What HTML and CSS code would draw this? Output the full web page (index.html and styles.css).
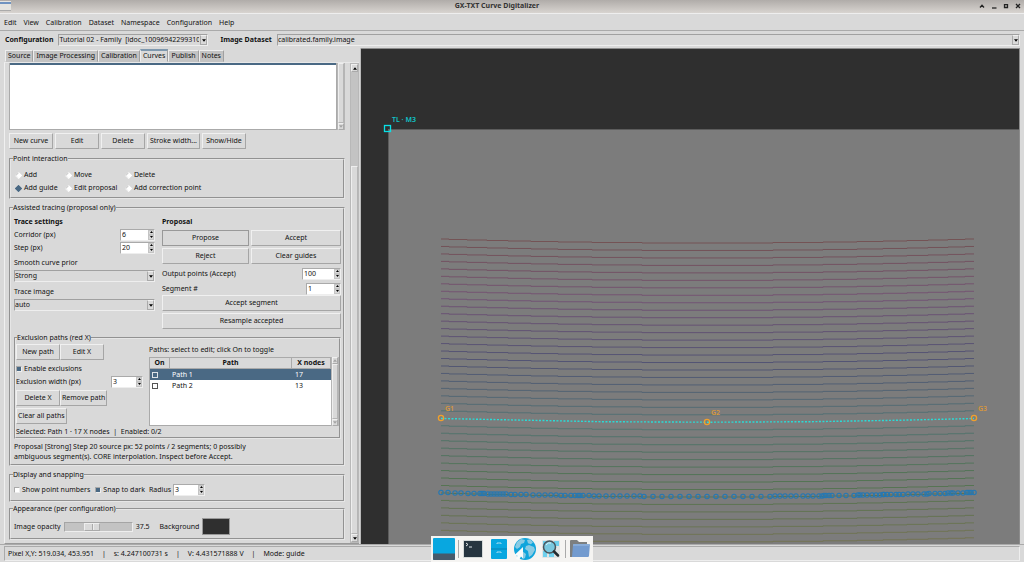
FILE: index.html
```html
<!DOCTYPE html>
<html lang="en">
<head>
<meta charset="utf-8">
<title>GX-TXT Curve Digitalizer</title>
<link rel="stylesheet" href="styles.css">
</head>
<body>
<svg class="defs" width="0" height="0" aria-hidden="true">
  <symbol id="down" viewBox="0 0 5 3"><path d="M0 0h5L2.500 3z"/></symbol>
  <symbol id="up" viewBox="0 0 5 3"><path d="M0 3h5L2.500 0z"/></symbol>
</svg>
<div class="window">
  <header class="titlebar">
    <svg class="app-icon" viewBox="0 0 11 10"><rect width="11" height="10" fill="#e4e4e0"/><rect y="1" width="11" height="2" fill="#6f93c0"/><path d="M0 9.500h11" stroke="#aaa"/></svg>
    <h1>GX-TXT Curve Digitalizer</h1>
    <div class="win-buttons">
      <button aria-label="Shade"><svg viewBox="0 0 6 6"><path d="M1 4.500L3 2.200L5 4.500"/></svg></button>
      <button aria-label="Minimize"><svg viewBox="0 0 6 6"><path d="M1 5h4.500"/></svg></button>
      <button aria-label="Maximize"><svg viewBox="0 0 6 6"><path d="M1.500 1.700h3v2.800h-3z"/></svg></button>
      <button aria-label="Close"><svg viewBox="0 0 6 6"><path d="M1 1l4 4M5 1L1 5"/></svg></button>
    </div>
  </header>
  <nav class="menubar">
    <button>Edit</button><button>View</button><button>Calibration</button><button>Dataset</button><button>Namespace</button><button>Configuration</button><button>Help</button>
  </nav>
  <div class="toolbar">
    <label for="config">Configuration</label>
    <div class="combo config"><select id="config"><option>Tutorial 02 - Family&nbsp; [idoc_100969422993100]</option></select><span><svg><use href="#down"/></svg></span></div>
    <label for="dataset">Image Dataset</label>
    <div class="combo grow"><select id="dataset"><option>calibrated.family.image</option></select><span><svg><use href="#down"/></svg></span></div>
  </div>
  <main class="main">
    <section class="side">
      <div class="tabs" role="tablist">
        <button role="tab">Source</button><button role="tab">Image Processing</button><button role="tab">Calibration</button><button role="tab" class="active" aria-selected="true">Curves</button><button role="tab">Publish</button><button role="tab">Notes</button>
      </div>
      <div class="page">
        <div class="content">
          <div class="curve-list"><div class="listbox"><div class="selected-row"></div></div><div class="scroll off"><i></i><b><svg><use href="#down"/></svg></b></div></div>
          <div class="actions"><button class="btn">New curve</button><button class="btn">Edit</button><button class="btn">Delete</button><button class="btn">Stroke width...</button><button class="btn">Show/Hide</button></div>

          <fieldset class="points">
            <legend>Point interaction</legend>
            <div class="radios">
              <label><input type="radio" name="mode">Add</label>
              <label><input type="radio" name="mode">Move</label>
              <label><input type="radio" name="mode">Delete</label>
              <label><input type="radio" name="mode" checked>Add guide</label>
              <label><input type="radio" name="mode">Edit proposal</label>
              <label><input type="radio" name="mode">Add correction point</label>
            </div>
          </fieldset>

          <fieldset class="tracing">
            <legend>Assisted tracing (proposal only)</legend>
            <div class="columns">
              <div class="settings">
                <h2>Trace settings</h2>
                <div class="row"><label for="corridor">Corridor (px)</label><div class="spin"><input type="number" id="corridor" value="6"><div><button aria-label="Increase"><svg><use href="#up"/></svg></button><button aria-label="Decrease"><svg><use href="#down"/></svg></button></div></div></div>
                <div class="row"><label for="step">Step (px)</label><div class="spin"><input type="number" id="step" value="20"><div><button aria-label="Increase"><svg><use href="#up"/></svg></button><button aria-label="Decrease"><svg><use href="#down"/></svg></button></div></div></div>
                <label class="above" for="prior">Smooth curve prior</label>
                <div class="combo"><select id="prior"><option>Strong</option></select><span><svg><use href="#down"/></svg></span></div>
                <label class="above" for="trace">Trace image</label>
                <div class="combo"><select id="trace"><option>auto</option></select><span><svg><use href="#down"/></svg></span></div>
              </div>
              <div class="proposal">
                <h2>Proposal</h2>
                <div class="pair"><button class="btn default">Propose</button><button class="btn">Accept</button><button class="btn">Reject</button><button class="btn">Clear guides</button></div>
                <div class="row tall"><label for="output">Output points (Accept)</label><div class="spin wide"><input type="number" id="output" value="100"><div><button aria-label="Increase"><svg><use href="#up"/></svg></button><button aria-label="Decrease"><svg><use href="#down"/></svg></button></div></div></div>
                <div class="row"><label for="segment">Segment #</label><div class="spin"><input type="number" id="segment" value="1"><div><button aria-label="Increase"><svg><use href="#up"/></svg></button><button aria-label="Decrease"><svg><use href="#down"/></svg></button></div></div></div>
                <div class="stack"><button class="btn">Accept segment</button><button class="btn">Resample accepted</button></div>
              </div>
            </div>

            <fieldset class="exclusion">
              <legend>Exclusion paths (red X)</legend>
              <div class="exclusion-body">
                <div class="exclusion-tools">
                  <div class="group"><button class="btn">New path</button><button class="btn">Edit X</button></div>
                  <label class="check"><input type="checkbox" checked>Enable exclusions</label>
                  <div class="row"><label for="exwidth">Exclusion width (px)</label><div class="spin small"><input type="number" id="exwidth" value="3"><div><button aria-label="Increase"><svg><use href="#up"/></svg></button><button aria-label="Decrease"><svg><use href="#down"/></svg></button></div></div></div>
                  <div class="group"><button class="btn">Delete X</button><button class="btn">Remove path</button></div>
                  <div class="group"><button class="btn">Clear all paths</button></div>
                </div>
                <div class="paths">
                  <p>Paths: select to edit; click On to toggle</p>
                  <div class="tree">
                    <div class="table-box">
                      <table>
                        <thead><tr><th class="on">On</th><th>Path</th><th class="nodes">X nodes</th></tr></thead>
                        <tbody>
                          <tr class="current"><td><input type="checkbox" aria-label="Path 1 on"></td><td>Path 1</td><td class="count">17</td></tr>
                          <tr><td><input type="checkbox" aria-label="Path 2 on"></td><td>Path 2</td><td class="count">13</td></tr>
                        </tbody>
                      </table>
                    </div>
                    <div class="scroll off"><b><svg><use href="#up"/></svg></b><i></i><b><svg><use href="#down"/></svg></b></div>
                  </div>
                </div>
              </div>
              <p class="selected">Selected: Path 1 · 17 X nodes&nbsp; |&nbsp; Enabled: 0/2</p>
            </fieldset>
            <p class="message">Proposal [Strong] Step 20 source px: 52 points / 2 segments; 0 possibly<br>ambiguous segment(s). CORE interpolation. Inspect before Accept.</p>
          </fieldset>

          <fieldset class="display">
            <legend>Display and snapping</legend>
            <div class="line">
              <label class="check"><input type="checkbox">Show point numbers</label>
              <label class="check snap"><input type="checkbox" checked>Snap to dark</label>
              <label class="radius" for="radius">Radius</label>
              <div class="spin small"><input type="number" id="radius" value="3"><div><button aria-label="Increase"><svg><use href="#up"/></svg></button><button aria-label="Decrease"><svg><use href="#down"/></svg></button></div></div>
            </div>
          </fieldset>

          <fieldset class="appearance">
            <legend>Appearance (per configuration)</legend>
            <div class="line">
              <label for="opacity">Image opacity</label>
              <input type="range" id="opacity" min="0" max="100" step="0.5" value="37.5">
              <output for="opacity">37.5</output>
              <span class="bg-label" id="bg">Background</span>
              <button class="swatch" aria-labelledby="bg"></button>
            </div>
          </fieldset>
        </div>
        <div class="scroll outer"><b><svg><use href="#up"/></svg></b><u></u><i></i><b><svg><use href="#down"/></svg></b></div>
      </div>
    </section>
    <svg class="canvas" id="canvas" role="img" aria-label="Curve canvas"></svg>
  </main>
  <footer class="status"><div><span>Pixel X,Y: 519.034, 453.951</span><span>|</span><span>s: 4.247100731 s</span><span>|</span><span>V: 4.431571888 V</span><span>|</span><span>Mode: guide</span></div></footer>
</div>

<nav class="dock" aria-label="Dock">
  <button aria-label="Show desktop"><svg viewBox="0 0 22 22"><rect width="22" height="22" rx="1" fill="#08a7e0"/><path d="M0 15.500h22V21a1 1 0 0 1-1 1H1a1 1 0 0 1-1-1z" fill="#465a6b"/></svg></button>
  <hr>
  <button aria-label="Terminal"><svg viewBox="0 0 22 22"><rect x="1" y="2" width="20" height="18" rx="1" fill="#d5dad9"/><rect x="2" y="3" width="18" height="16" fill="#263540"/><path d="M4 5l2 1.500L4 8M7 9h3" fill="none" stroke="#dfe5e8"/></svg></button>
  <button aria-label="Files"><svg viewBox="0 0 22 22"><rect x="3" y="1" width="16" height="20" rx="1" fill="#08a7e0"/><path d="M3 11h16" stroke="#0681b3"/><path d="M9 6v-1h4v1M9 15v-1h4v1" fill="none" stroke="#a5dcf0"/></svg></button>
  <button aria-label="Web browser"><svg viewBox="0 0 22 22"><circle cx="11" cy="11" r="11" fill="#0fa5dc"/><path d="M3 4l4-3 4 1-1 3-3 1-1 3-3 2-2-2zM13 2l3-.8 3 3-2 2-3-1zM12 8l3-1 5 2 1 3-3 5-3 2-1-6-3-2zM8 13l4 3-1 4-2 1-2-4z" fill="#8acbe3"/><path d="M9 9L0 17.500l3.500.3L2 21l3 1 2-3.500 2 2z" fill="#f8fbfc"/></svg></button>
  <button aria-label="Application finder"><svg viewBox="0 0 22 22"><rect x="2" y="2" width="18" height="18" rx="1" fill="#e0e5e5"/><path d="M3 3h4v4H3zM14 3h5v5h-5zM3 13h4v6H3zM9 15h5v4H9z" fill="#6ed0ed"/><circle cx="9.500" cy="9" r="6" fill="#78c8df" stroke="#48545b" stroke-width="1.500"/><path d="M6 7q2-3 5-2" fill="none" stroke="#d9f3fa"/><path d="M14 13.500l4 4" stroke="#222b30" stroke-width="2.500" stroke-linecap="round"/></svg></button>
  <hr>
  <button aria-label="Home folder"><svg viewBox="0 0 22 22"><path d="M1 3q0-1 1-1h6l2 2h8v15H1z" fill="#7c7f80"/><path d="M3 19L4 7q.2-1 1.200-1H20q1 0 .9 1L20 18q-.2 1-1.200 1z" fill="#739bcf"/><path d="M4 7h16" stroke="#9dbce2"/></svg></button>
</nav>
<script src="canvas.js"></script>
</body>
</html>
```

FILE: styles.css
```css
* { box-sizing: border-box; }
body, h1, h2, p, fieldset, legend, hr { margin: 0; padding: 0; }
body, button, input, select {
  font: 7px/10px "Noto Sans", sans-serif;
  color: #111;
}
body { background: #d9d9d9; overflow: hidden; }
button { border: 0; padding: 0; background: none; white-space: nowrap; }
fieldset { border: 2px groove #e6e6e6; min-width: 0; }
legend { line-height: 10px; margin-left: -1px; }
.defs { position: absolute; }
.window { height: 100vh; display: flex; flex-direction: column; }

.titlebar {
  display: flex; align-items: center; height: 13px; padding: 0 3px 1px 0;
  background: linear-gradient(#b0aca9, #d8d4d0);
}
.titlebar h1 { flex: 1; text-align: center; font-size: 7px; line-height: 10px; color: #333; padding-left: 4px; }
.app-icon { width: 11px; height: 10px; }
.win-buttons { display: flex; gap: 6px; }
.win-buttons button, .win-buttons svg { display: block; width: 6px; height: 6px; }
.win-buttons path { fill: none; stroke: #222; stroke-width: 1.3; }

.menubar {
  display: flex; gap: 7px; height: 18px; padding: 1px 4px 0; align-items: center;
  border-top: 1px solid #eee; border-bottom: 1px solid #aaa;
}
.toolbar { display: flex; align-items: center; height: 17px; padding: 2px 4px 1px 5px; }
.toolbar label { font-weight: bold; margin-right: 5px; white-space: nowrap; }

.combo { position: relative; display: flex; height: 12px; }
.combo select {
  appearance: none; width: 100%; height: 12px; padding: 0 8px 0 0;
  background: #d9d9d9; border: 1px solid; border-color: #a0a0a0 #eee #eee #a0a0a0; border-radius: 0;
}
.combo span {
  position: absolute; right: 1px; top: 1px; width: 7px; height: 10px;
  display: flex; align-items: center; justify-content: center;
  background: #d9d9d9; border: 1px solid; border-color: #f0f0f0 #aaa #aaa #aaa; pointer-events: none;
}
.combo svg { width: 4px; height: 3px; }
.config { width: 150px; margin-right: 12px; }
.grow { flex: 1; }

.main { flex: 1; min-height: 0; display: flex; padding-right: 4px; }
.side { flex: 0 0 361px; display: flex; flex-direction: column; padding: 1px 1px 0 4px; border-right: 1px solid #bbb; }
.tabs { display: flex; height: 13px; padding-left: 1px; }
.tabs button {
  background: #c3c3c3; padding: 0 2px; border: 1px solid;
  border-color: #eee #a0a0a0 transparent #eee; margin-top: 1px; height: 12px;
}
.tabs .active { background: #d9d9d9; border-top: 2px solid #7e98ae; margin-top: 0; height: 13px; }
.page { flex: 1; min-height: 0; display: flex; border-left: 1px solid #f0f0f0; border-top: 1px solid #e8e8e8; border-bottom: 1px solid #999; }
.content { flex: 1; min-width: 0; padding: 0 5px 0 4px; overflow: hidden; }

.curve-list { display: flex; height: 67px; }
.listbox { flex: 1; background: #fff; border: 1px solid #aaa; border-top: 0; }
.selected-row { height: 2px; background: #4a6984; }
.scroll { width: 8px; display: flex; flex-direction: column; border-left: 1px solid #b5b5b5; border-right: 1px solid #b5b5b5; }
.scroll b { height: 7px; display: flex; align-items: center; justify-content: center; border: 1px solid; border-color: #f0f0f0 #aaa #aaa #f0f0f0; }
.scroll svg { width: 4px; height: 3px; }
.scroll i { flex: 1; border: 1px solid; border-color: #eee #b5b5b5 #b5b5b5 #eee; }
.scroll.off svg { fill: #a3a3a3; }
.outer { width: 9px; border: 1px solid #b8b8b8; }
.outer b { height: 8px; }
.outer u { height: 94px; background: #c3c3c3; }

.btn {
  height: 16px; padding: 0 2px; background: #d9d9d9;
  border: 1px solid; border-color: #f0f0f0 #a5a5a5 #a5a5a5 #f0f0f0;
}
.btn.default { border: 1px solid #999; }
.actions { display: flex; gap: 2px; padding: 3px 0 5px; }
.actions .btn { min-width: 44px; }

.points { height: 45px; }
.points legend { margin-left: 2px; }
.radios { display: grid; grid-template-columns: 50px 60px 1fr; row-gap: 3px; padding: 6px 4px 0 5px; }
.radios label { display: flex; align-items: center; gap: 3px; white-space: nowrap; }
.radios input {
  appearance: none; margin: 0; width: 5px; height: 5px; background: #fff;
  transform: rotate(45deg); border: 1px solid; border-color: #fff #fff #eee #ccc;
}
.radios input:checked { background: #4a6984; border-color: #4a6984; }

.tracing { margin-top: 4px; padding: 4px 2px 2px 3px; }
h2 { font-size: 7px; line-height: 10px; margin-bottom: 3px; }
.settings h2 { margin-bottom: 1px; }
.columns { display: grid; grid-template-columns: 141px 1fr; gap: 7px; }
.row { display: flex; align-items: center; justify-content: space-between; height: 13px; }
.row.tall { height: 17px; }
.above { display: block; padding: 4px 0 2px; }
.settings .combo + .above { padding-top: 5px; }
.spin { display: flex; width: 35px; height: 12px; border: 1px solid; border-color: #aaa #eee #eee #aaa; }
.spin.wide { width: 39px; }
.spin.small { width: 32px; }
.spin input {
  appearance: textfield; flex: 1; min-width: 0; height: 10px; border: 0; border-radius: 0;
  padding: 0 1px; background: #fff;
}
.spin input::-webkit-inner-spin-button { appearance: none; margin: 0; }
.spin div { width: 6px; display: flex; flex-direction: column; }
.spin button { flex: 1; display: flex; align-items: center; justify-content: center; border: 1px solid #c4c4c4; }
.spin svg { width: 3px; height: 2px; }
.pair { display: grid; grid-template-columns: 87px 1fr; gap: 2px; margin-bottom: 1px; }
.stack { display: grid; gap: 2px; }

.exclusion { margin-top: 4px; padding: 1px 0 0; }
.exclusion legend { margin-left: 1px; }
.exclusion-body { display: flex; }
.exclusion-tools { flex: 0 0 133px; }
.group { display: flex; margin-bottom: 2px; }
.group .btn { min-width: 44px; padding: 0 1px; }
.check { display: flex; align-items: center; gap: 2px; height: 13px; white-space: nowrap; }
.check input {
  appearance: none; width: 6px; height: 6px; margin: 0; background: #fff;
  border: 1px solid; border-color: #aaa #eee #eee #aaa;
}
.check input:checked { background: #4a6984; }
.exclusion-tools .row { width: 127px; margin-bottom: 2px; }
.paths { flex: 1; min-width: 0; padding-top: 1px; }
.tree { display: flex; height: 69px; margin-top: 2px; }
.table-box { flex: 1; background: #fff; border: 1px solid #aaa; border-right: 0; }
table { width: 100%; border-collapse: separate; border-spacing: 0; table-layout: fixed; }
th { height: 11px; padding: 0; background: #d9d9d9; border-right: 1px solid #aaa; border-bottom: 1px solid #aaa; }
td { height: 11px; padding: 0 2px; }
.on { width: 20px; }
.nodes { width: 39px; }
.count { padding-left: 3px; }
td input { appearance: none; display: block; width: 6px; height: 6px; margin: 0; border: 1px solid #555; border-radius: 0; }
.current td { background: #4a6984; color: #fff; }
.current input { border-color: #dde3e8; }
.selected { padding-top: 1px; }
.message { padding-top: 3px; }

.line { display: flex; align-items: center; white-space: nowrap; }
.display { margin-top: 4px; padding: 3px 4px 4px 3px; }
.display .line { height: 13px; }
.snap { margin-left: 5px; }
.radius { margin: 0 2px 0 4px; }
.appearance { margin-top: 2px; padding: 3px 3px 2px; }
.appearance .line { height: 19px; }
input[type="range"] {
  appearance: none; width: 69px; height: 10px; margin: 0 3px; background: #c3c3c3;
  border: 1px solid; border-color: #a5a5a5 #eee #eee #a5a5a5;
}
input[type="range"]::-webkit-slider-thumb {
  appearance: none; width: 16px; height: 8px;
  background: linear-gradient(90deg, #d9d9d9 7px, #aaa 7px, #aaa 8px, #eee 8px, #eee 9px, #d9d9d9 9px);
  border: 1px solid; border-color: #eee #aaa #aaa #eee;
}
.bg-label { margin: 0 3px 0 10px; }
.swatch { width: 28px; height: 17px; background: #2f2f2f; border: 1px solid #999; }

.canvas { flex: 1; min-width: 0; width: 100%; height: 100%; background: #2f2f2f; border: solid #8c8c8c; border-width: 1px 1px 0 0; }
.canvas text { font-weight: 600; }

.status { height: 18px; padding: 1px 4px 2px; border-top: 1px solid #aaa; }
.status div { display: flex; align-items: center; gap: 8px; height: 15px; padding-left: 3px; border: 1px solid; border-color: #aaa #eee #eee #aaa; }

.dock {
  position: fixed; bottom: 0; left: 50%; transform: translateX(-50%);
  display: flex; align-items: center; gap: 4px; height: 26px; padding: 2px; background: #f5f4f2;
}
.dock button, .dock svg { display: block; width: 22px; height: 22px; }
.dock hr { border: 0; width: 1px; height: 18px; margin: 0 -1px; background: #aaa; }
```

FILE: canvas.js
```js
const canvas = document.getElementById("canvas");
const NS = "http://www.w3.org/2000/svg";

function add(name, attrs, text) {
  const el = document.createElementNS(NS, name);
  for (const key in attrs) el.setAttribute(key, attrs[key]);
  if (text) el.textContent = text;
  canvas.appendChild(el);
}

// Every curve sags by half a pixel at each of these positions, then rises again.
const steps = [88, 106, 126, 147, 170, 197, 231, 281, 412, 462, 496, 522, 546, 567, 587, 604];
const left = 80;
const right = 613;
const firstY = 190;
const spacing = 7.47;

function sag(x) {
  const passed = steps.filter((s) => s <= x).length;
  return (passed <= 8 ? passed : 16 - passed) * 0.5;
}

function curve(y) {
  let d = `M${left} ${y}`;
  for (const s of steps) d += `H${s}V${y + sag(s)}`;
  return d + `H${right}`;
}

add("rect", { x: 27, y: 80, width: "100%", height: "100%", fill: "#7c7c7c" });
add("path", { d: "M27.5 600V80.5H2000", fill: "none", stroke: "#5c5c5c" });

for (let i = 0; i < 41; i++) {
  if (i === 24) continue;
  const hue = 355 - i * 7.3;
  add("path", { d: curve(firstY + i * spacing), fill: "none", stroke: `hsl(${hue} 17% 39%)` });
}

const blueY = firstY + 34 * spacing - 0.5;
const blueX = [
  441, 448, 455, 461, 468, 474, 480, 482, 484, 488, 491, 494, 497, 500, 503, 506, 511, 515, 521, 526,
  533, 539, 545, 551, 556, 561, 565, 571, 575, 578, 580, 583, 589, 594, 599, 606, 613, 620, 627, 634,
  640, 644, 653, 662, 671, 680, 689, 698, 707, 716, 725, 734, 743, 752, 761, 770, 775, 780, 785, 791,
  796, 803, 808, 813, 819, 822, 824, 826, 829, 832, 839, 846, 854, 858, 860, 863, 867, 872, 876, 880,
  883, 884, 887, 891, 896, 899, 903, 908, 913, 918, 924, 927, 929, 935, 940, 945, 948, 951, 953, 958,
  963, 967, 969, 971, 974
];
for (const px of blueX) {
  const x = px - 361;
  add("circle", { cx: x, cy: blueY + sag(x), r: 2.2, fill: "none", stroke: "#2478b4", "stroke-width": 1.1 });
}

add("path", {
  d: "M80 369.500L180 371.500L240 372.700L347 373.200L450 372.700L540 371.200L613 369.500",
  fill: "none", stroke: "#2adbd6", "stroke-width": 1.4, "stroke-dasharray": "2 1.500"
});
for (const [x, y, name, tx, ty] of [[80, 369, "G1", 84, 362], [346, 373, "G2", 350, 366], [613, 369, "G3", 617, 362]]) {
  add("circle", { cx: x, cy: y, r: 2.6, fill: "none", stroke: "#f0a02c", "stroke-width": 1.3 });
  add("text", { x: tx, y: ty, fill: "#d6973c" }, name);
}
add("rect", { x: 23.5, y: 76.500, width: 6, height: 6, fill: "none", stroke: "#08e0e6", "stroke-width": 1.3 });
add("text", { x: 31, y: 73, fill: "#10c4c9" }, "TL · M3");
```
